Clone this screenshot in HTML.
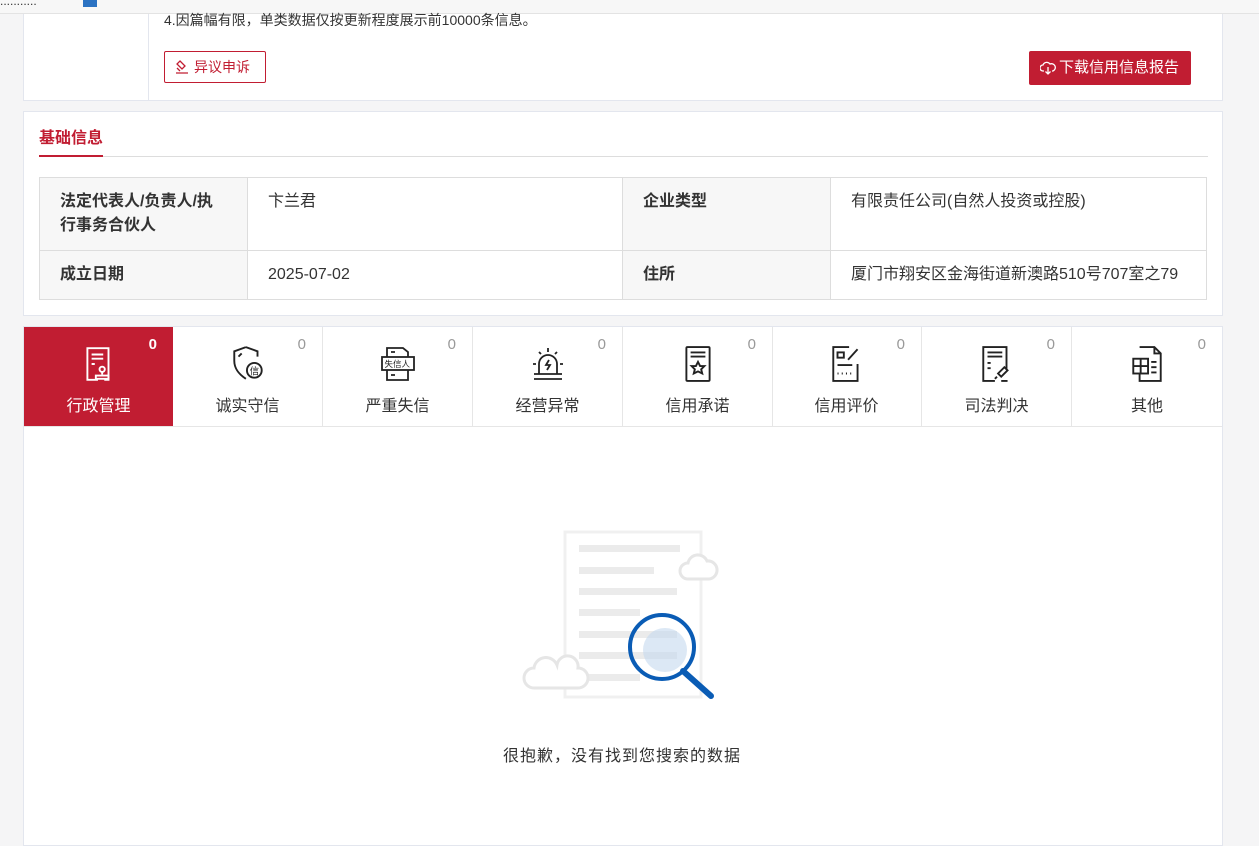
<!DOCTYPE html>
<html><head><meta charset="utf-8"><style>
*{box-sizing:border-box;margin:0;padding:0}
body{width:1259px;height:824px;overflow:hidden;background:#f5f5f6;font-family:"Liberation Sans","Noto Sans CJK SC",sans-serif;color:#333;position:relative}
.top{position:absolute;left:0;top:0;width:1259px;height:14px;background:#f7f7f7;border-bottom:1px solid #e3e3e3;font-size:12px;color:#333}
.card{position:absolute;background:#fff;border:1px solid #e3e6ee}
.btn1{position:absolute;left:164px;top:51px;width:102px;height:32px;border:1px solid #c11d32;color:#c11d32;font-size:14px;line-height:30px;padding-left:29px;border-radius:2px}
.btn2{position:absolute;left:1029px;top:51px;width:162px;height:34px;background:#c11d32;color:#fff;font-size:15px;line-height:34px;padding-left:30px;border-radius:2px}
table{position:absolute;left:39px;top:177px;border-collapse:collapse;width:1168px;font-size:16px}
td{border:1px solid #ddd;padding:0 20px;line-height:24px}
tr.r1 td{vertical-align:top;padding-top:12px;padding-bottom:0}
tr.r2 td{vertical-align:middle}
td.l{background:rgba(246,246,246,.9);font-weight:bold;width:208px}
.tab{position:absolute;top:327px;width:150px;height:99px;border-right:1px solid #e6e6e6;text-align:center;font-size:16px}
.tab .n{position:absolute;right:16px;top:9px;color:#999;font-size:15px}
.tab svg{position:absolute;left:57px;top:18px;width:36px;height:38px}
.tab .t{position:absolute;left:0;right:0;top:65px}
</style></head><body>
<div class="top"><span style="position:absolute;left:0;top:-6px">...........</span><span style="position:absolute;left:83px;top:-3px;width:14px;height:10px;background:#2b72c2"></span></div>
<div class="card" style="left:23px;top:14px;width:1200px;height:87px;border-top:none">
<div style="position:absolute;left:124px;top:0;bottom:0;border-left:1px solid #e3e6ee"></div>
<div style="position:absolute;left:140px;top:-4px;font-size:14px;color:#333">4.因篇幅有限，单类数据仅按更新程度展示前10000条信息。</div>
</div>
<div class="btn1"><svg style="position:absolute;left:10px;top:8px" width="14" height="15" viewBox="0 0 14 15"><path d="M5 1l5 5-3 3-5-5zM2 8l3 3M1 13h12" fill="none" stroke="#c11d32" stroke-width="1.3"/></svg>异议申诉</div>
<div class="btn2"><svg style="position:absolute;left:11px;top:10px" width="16" height="14" viewBox="0 0 16 14"><path d="M4 10H3a3 3 0 010-6 4 4 0 017-1 3 3 0 013 7h-1M8 6v7M5.5 10.5L8 13l2.5-2.5" fill="none" stroke="#fff" stroke-width="1.3"/></svg>下载信用信息报告</div>
<div class="card" style="left:23px;top:111px;width:1200px;height:205px">
<div style="position:absolute;left:15px;top:12px;font-size:16px;font-weight:bold;color:#c11d32">基础信息</div>
<div style="position:absolute;left:15px;top:44px;width:1169px;height:1px;background:#ddd"></div>
<div style="position:absolute;left:15px;top:43px;width:64px;height:2px;background:#c11d32"></div>
</div>
<table>
<tr class="r1" style="height:73px"><td class="l">法定代表人/负责人/执行事务合伙人</td><td style="width:375px">卞兰君</td><td class="l">企业类型</td><td>有限责任公司(自然人投资或控股)</td></tr>
<tr class="r2" style="height:49px"><td class="l">成立日期</td><td>2025-07-02</td><td class="l">住所</td><td>厦门市翔安区金海街道新澳路510号707室之79</td></tr>
</table>
<div class="card" style="left:23px;top:326px;width:1200px;height:520px"><div style="position:absolute;left:0;right:0;top:99px;height:1px;background:#e6e6e6"></div></div>

<div class="tab" style="left:24px;width:149px;background:#c11d32;color:#fff;border:none"><span class="n" style="color:#fff;font-weight:bold">0</span>
<svg viewBox="0 0 32 36" fill="none" stroke="#fff" stroke-width="1.8"><path d="M21 33h4V3H5v30h10M9 9h11M9 13h11M9 18h3"/><circle cx="19" cy="23" r="2.5"/><path d="M19 26v2M13 29h12v3H13z"/></svg><div class="t">行政管理</div></div>
<div class="tab" style="left:173px"><span class="n">0</span><svg viewBox="0 0 34 36" fill="none" stroke="#222" stroke-width="1.8"><path d="M15 2L4 6v9c0 8 5 13 11 17M15 2l11 4v5"/><path d="M8 11l3-3"/><circle cx="23" cy="24" r="7"/><text x="18.5" y="28" font-size="9" fill="#222" stroke="none">信</text></svg><div class="t">诚实守信</div></div>
<div class="tab" style="left:323px"><span class="n">0</span><svg viewBox="0 0 36 36" fill="none" stroke="#222" stroke-width="1.8"><path d="M7 11V2h16l5 4v5M7 24v10h21V24M11 6h4M11 29h4"/><rect x="2" y="11" width="32" height="13"/><text x="4.5" y="21" font-size="8.5" fill="#222" stroke="none">失信人</text></svg><div class="t">严重失信</div></div>
<div class="tab" style="left:473px"><span class="n">0</span><svg viewBox="0 0 36 36" fill="none" stroke="#222" stroke-width="1.8"><path d="M9 28V18a9 9 0 0118 0v10M4 28h28M4 33h28M18 2v4M9 6l2 2M27 6l-2 2M3 18h3M30 18h3M19 14l-3 5h4l-3 5"/></svg><div class="t">经营异常</div></div>
<div class="tab" style="left:623px"><span class="n">0</span><svg viewBox="0 0 32 36" fill="none" stroke="#222" stroke-width="1.8"><rect x="5" y="2" width="22" height="32" rx="1"/><path d="M9 7h14M9 11h14M16 16l2 4h4l-3 3 1 4-4-2-4 2 1-4-3-3h4z"/></svg><div class="t">信用承诺</div></div>
<div class="tab" style="left:772px"><span class="n">0</span><svg viewBox="0 0 34 36" fill="none" stroke="#222" stroke-width="1.8"><path d="M27 18v16H4V2h15"/><rect x="8" y="7" width="6" height="5"/><path d="M18 14l9-10M8 19h14M8 27h1M12 27h1M16 27h1M20 27h1"/></svg><div class="t">信用评价</div></div>
<div class="tab" style="left:922px"><span class="n">0</span><svg viewBox="0 0 34 36" fill="none" stroke="#222" stroke-width="1.8"><path d="M15 34H4V2h22v21M8 7h14M8 11h14M8 17h3M8 22h3M18 27l6-6 3 3-6 6zM17 30l-2 2M21 34h6"/></svg><div class="t">司法判决</div></div>
<div class="tab" style="left:1072px;border:none"><span class="n">0</span><svg viewBox="0 0 34 36" fill="none" stroke="#222" stroke-width="1.8"><path d="M10 2h14l6 6v26H10v-7M24 2v6h6M21 16h5M21 21h5M21 26h5"/><rect x="4" y="13" width="14" height="14"/><path d="M11 13v14M4 20h14"/></svg><div class="t">其他</div></div>

<svg style="position:absolute;left:520px;top:528px" width="205" height="180" viewBox="0 0 205 180">
<rect x="45" y="4" width="136" height="165" fill="#fff" stroke="#f0f0f0" stroke-width="3"/>
<g fill="#ebebeb"><rect x="59" y="17" width="101" height="7"/><rect x="59" y="39" width="75" height="7"/><rect x="59" y="60" width="98" height="7"/><rect x="59" y="81" width="61" height="7"/><rect x="59" y="103" width="98" height="7"/><rect x="59" y="124" width="98" height="7"/><rect x="59" y="146" width="61" height="7"/></g>
<path d="M168 51a8 8 0 010-16 10 10 0 0119-2 8 8 0 012 18z" fill="#fff" stroke="#e6e6e6" stroke-width="3"/>
<path d="M14 160a10 10 0 010-20 12 12 0 0123-3 10 10 0 0121 3 9 9 0 010 20z" fill="#fff" stroke="#e6e6e6" stroke-width="3"/>
<circle cx="145" cy="122" r="22" fill="#c5d8ee" opacity=".6"/>
<circle cx="142" cy="119" r="32" fill="none" stroke="#0a5cb5" stroke-width="4"/>
<path d="M163 143l28 25" stroke="#0a5cb5" stroke-width="6" stroke-linecap="round"/>
</svg>
<div style="position:absolute;left:0;width:1244px;top:742px;text-align:center;font-size:16px;color:#333;letter-spacing:1px">很抱歉，没有找到您搜索的数据</div>
</body></html>
